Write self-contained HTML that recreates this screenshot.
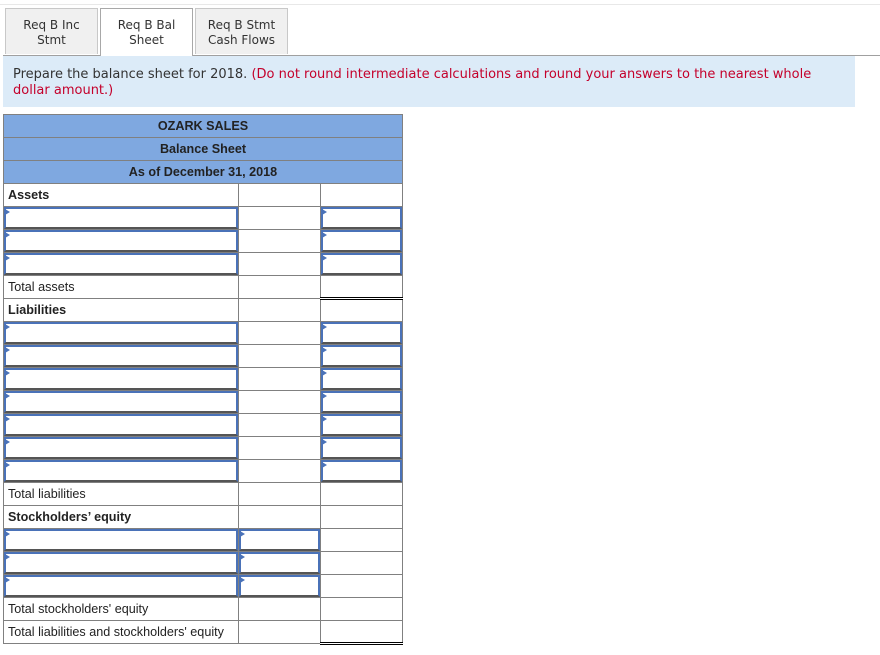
<!DOCTYPE html>
<html><head><meta charset="utf-8"><style>
body{margin:0;background:#fff;width:880px;height:655px;position:relative;overflow:hidden;font-family:"Liberation Sans",Arial,sans-serif;}
.topline{position:absolute;left:0;top:4px;width:880px;height:1px;background:#e8e8e8}
.tab{position:absolute;top:8px;height:46px;border:1px solid #c8c8c8;border-bottom:none;background:#f0f0f0;font-family:"DejaVu Sans",Verdana,sans-serif;font-size:12px;color:#333;text-align:center;line-height:15px;box-sizing:border-box;padding-top:9px}
.tab.sel{background:#fff;border-color:#a8a8a8;height:48px;z-index:2}
.tabline{position:absolute;left:3px;top:55px;width:877px;height:1px;background:#a0a0a0}
.instr{position:absolute;left:3px;top:56px;width:852px;height:51px;background:#dcebf8;box-sizing:border-box;padding:11px 10px;font-family:"DejaVu Sans",Verdana,sans-serif;font-size:13px;line-height:16px;color:#333}
.instr span{color:#c4002b}
table{position:absolute;left:3px;top:114px;border-collapse:collapse;font-size:12.6px;color:#222}
td{border:1px solid #808080;height:23px;padding:0;position:relative;box-sizing:border-box}
td.h{background:#7fa8e0;text-align:center;font-weight:bold;color:#222;height:23px}
td.l{padding-left:4px}
td.b{font-weight:bold}
.in{position:absolute;left:0;top:0;right:0;bottom:0;border:2px solid #4a72b8;border-bottom-color:#555;}
.in::before{content:"";position:absolute;left:-1px;top:0;border-left:5px solid #4a72b8;border-top:3px solid transparent;border-bottom:3px solid transparent}
td.tot{border-top:1.5px solid #000}
td.dbl{border-top:1.5px solid #000;border-bottom:3px double #000}
</style></head><body>
<div class="topline"></div>
<div class="tab" style="left:5px;width:93px">Req B Inc<br>Stmt</div>
<div class="tab sel" style="left:100px;width:93px">Req B Bal<br>Sheet</div>
<div class="tab" style="left:195px;width:93px">Req B Stmt<br>Cash Flows</div>
<div class="tabline"></div>
<div class="instr">Prepare the balance sheet for 2018. <span>(Do not round intermediate calculations and round your answers to the nearest whole dollar amount.)</span></div>
<table>
<colgroup><col style="width:235px"><col style="width:82px"><col style="width:82px"></colgroup>
<tr><td class="h" colspan="3">OZARK SALES</td></tr>
<tr><td class="h" colspan="3">Balance Sheet</td></tr>
<tr><td class="h" colspan="3">As of December 31, 2018</td></tr>
<tr><td class="l b">Assets</td><td></td><td></td></tr>
<tr><td><div class="in"></div></td><td></td><td><div class="in"></div></td></tr>
<tr><td><div class="in"></div></td><td></td><td><div class="in"></div></td></tr>
<tr><td><div class="in"></div></td><td></td><td><div class="in"></div></td></tr>
<tr><td class="l">Total assets</td><td></td><td class="dbl"></td></tr>
<tr><td class="l b">Liabilities</td><td></td><td></td></tr>
<tr><td><div class="in"></div></td><td></td><td><div class="in"></div></td></tr>
<tr><td><div class="in"></div></td><td></td><td><div class="in"></div></td></tr>
<tr><td><div class="in"></div></td><td></td><td><div class="in"></div></td></tr>
<tr><td><div class="in"></div></td><td></td><td><div class="in"></div></td></tr>
<tr><td><div class="in"></div></td><td></td><td><div class="in"></div></td></tr>
<tr><td><div class="in"></div></td><td></td><td><div class="in"></div></td></tr>
<tr><td><div class="in"></div></td><td></td><td><div class="in"></div></td></tr>
<tr><td class="l">Total liabilities</td><td></td><td></td></tr>
<tr><td class="l b">Stockholders’ equity</td><td></td><td></td></tr>
<tr><td><div class="in"></div></td><td><div class="in"></div></td><td></td></tr>
<tr><td><div class="in"></div></td><td><div class="in"></div></td><td></td></tr>
<tr><td><div class="in"></div></td><td><div class="in"></div></td><td></td></tr>
<tr><td class="l">Total stockholders' equity</td><td class="tot"></td><td></td></tr>
<tr><td class="l">Total liabilities and stockholders' equity</td><td></td><td class="dbl"></td></tr>
</table>
</body></html>
